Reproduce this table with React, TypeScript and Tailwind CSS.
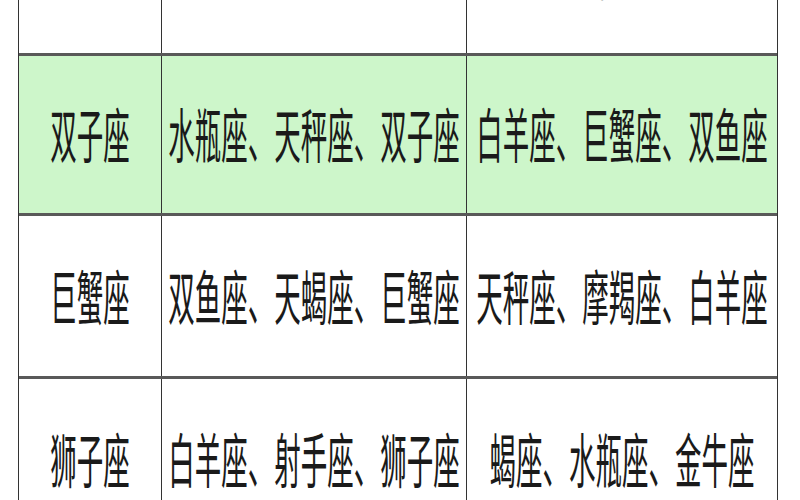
import React from "react";

const rows = [
  { a: "金牛座", b: "处女座、摩羯座、金牛座", c: "天蝎座、狮子座、水瓶座", bg: "bg-white", h: "h-[166px]" },
  { a: "双子座", b: "水瓶座、天秤座、双子座", c: "白羊座、巨蟹座、双鱼座", bg: "bg-[#cdf6ca]", h: "h-[160px]" },
  { a: "巨蟹座", b: "双鱼座、天蝎座、巨蟹座", c: "天秤座、摩羯座、白羊座", bg: "bg-white", h: "h-[163px]" },
  { a: "狮子座", b: "白羊座、射手座、狮子座", c: "蝎座、水瓶座、金牛座", bg: "bg-white", h: "h-[163px]" },
];

function T({ children }: { children: React.ReactNode }) {
  return (
    <span
      className="inline-block scale-y-[2.25] text-[26.5px] leading-none text-[#1a1a1a] whitespace-nowrap"
      style={{ fontFamily: '"Noto Sans CJK SC", "Noto Sans", sans-serif' }}
    >
      {children}
    </span>
  );
}

export default function App() {
  return (
    <div className="w-[800px] h-[500px] overflow-hidden bg-white pl-[18px]">
      <div className="w-[760px] mt-[-110px] border-l border-r border-[#333]">
        {rows.map((r, i) => (
          <div
            key={i}
            className={`${r.h} ${r.bg} grid grid-cols-[143px_305px_310px] border-b-[3px] border-[#595959]`}
          >
            <div className="flex items-center justify-center border-r border-[#333]">
              <T>{r.a}</T>
            </div>
            <div className="flex items-center justify-center border-r border-[#333]">
              <T>{r.b}</T>
            </div>
            <div className="flex items-center justify-center">
              <T>{r.c}</T>
            </div>
          </div>
        ))}
      </div>
    </div>
  );
}
